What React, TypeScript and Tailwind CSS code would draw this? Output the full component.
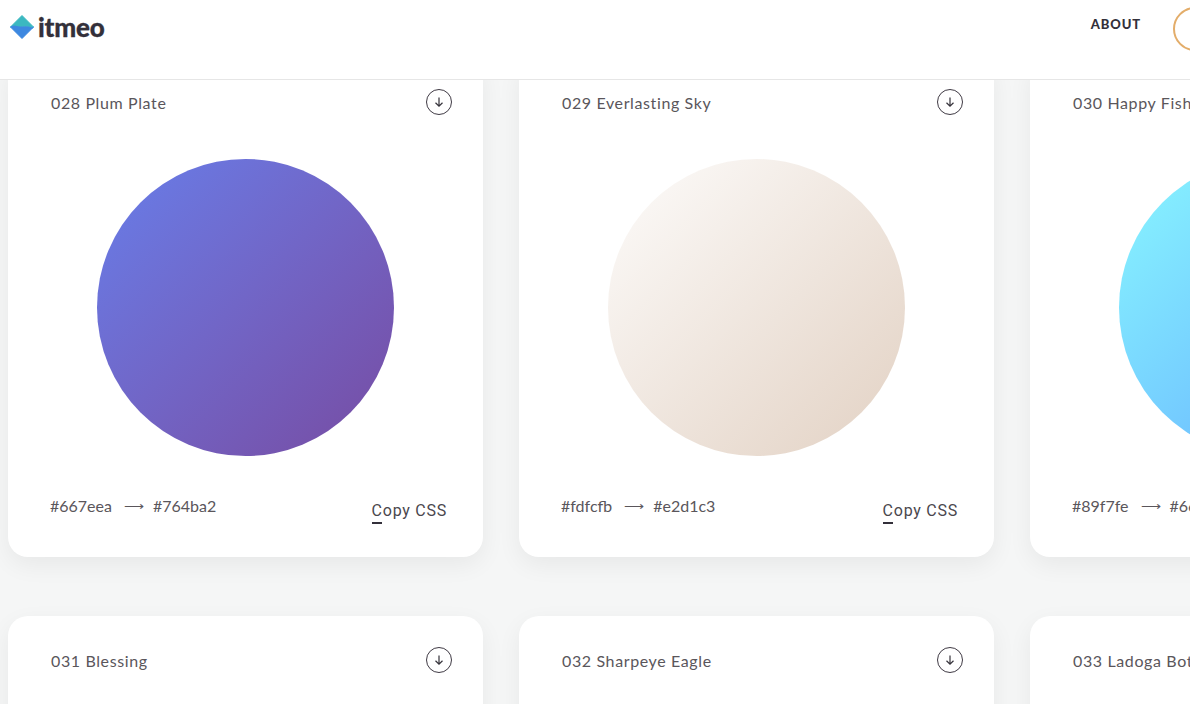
import React from 'react';

interface Gradient {
  id: string;
  name: string;
  from: string;
  to: string;
  circle: string;
}

const gradients: Gradient[] = [
  { id: '028', name: 'Plum Plate', from: '#667eea', to: '#764ba2', circle: 'bg-gradient-to-br from-[#667eea] to-[#764ba2]' },
  { id: '029', name: 'Everlasting Sky', from: '#fdfcfb', to: '#e2d1c3', circle: 'bg-gradient-to-br from-[#fdfcfb] to-[#e2d1c3]' },
  { id: '030', name: 'Happy Fisher', from: '#89f7fe', to: '#66a6ff', circle: 'bg-gradient-to-br from-[#89f7fe] to-[#66a6ff]' },
];

const nextRow = [
  { id: '031', name: 'Blessing' },
  { id: '032', name: 'Sharpeye Eagle' },
  { id: '033', name: 'Ladoga Bottom' },
];

const DownloadButton = () => (
  <button className="flex h-[26px] w-[26px] shrink-0 items-center justify-center rounded-full border border-[#3f3a44] text-[#35323a]">
    <svg width="12" height="12" viewBox="0 0 12 12" fill="none" stroke="currentColor" strokeWidth="1.2">
      <path d="M6 1.5V10M2.5 6.8 6 10.2l3.5-3.4" />
    </svg>
  </button>
);

const CardTitle = ({ id, name }: { id: string; name: string }) => (
  <div className="flex items-start justify-between pl-[43px] pr-[31px] pt-[31px]">
    <span className="mt-[3px] whitespace-nowrap text-[16px] leading-[22px] tracking-[0.62px] text-[#5a565b]">
      {id} {name}
    </span>
    <DownloadButton />
  </div>
);

const Logo = () => (
  <div className="flex items-center gap-[4px]">
    <svg width="24" height="24" viewBox="0 0 24 24" className="shrink-0">
      <path d="M12 0.5 23.5 12 22 13.2C17 10.5 12 13 7 11.5 4.5 10.8 2 11 0.5 12Z" fill="#3bb8c0" stroke="#3bb8c0" strokeLinejoin="round" />
      <path d="M0.5 12C2 11 4.5 10.8 7 11.5 12 13 17 10.5 22 13.2L23.5 12 12 23.5Z" fill="#3d88e0" stroke="#3d88e0" strokeLinejoin="round" />
    </svg>
    <span className="text-[26px] font-black leading-none tracking-[-0.2px] text-[#33303a] [-webkit-text-stroke:0.3px_#33303a]">itmeo</span>
  </div>
);

export default function App() {
  return (
    <div className="relative h-[704px] overflow-hidden bg-[#f5f6f6] font-['Lato','Noto_Sans',sans-serif]">
      <header className="absolute inset-x-0 top-0 z-10 flex h-[80px] items-start justify-between overflow-hidden border-b border-[#e6e6e6] bg-white pl-[10px]">
        <div className="pt-[14px]">
          <Logo />
        </div>
        <div className="flex items-start">
          <a className="mt-[16px] text-[13px] font-black leading-[16px] tracking-[0.9px] text-[#33303a]">ABOUT</a>
          <div className="ml-[32px] mt-[7px] h-[44px] w-[44px] -mr-[27px] rounded-full border-2 border-[#e3ad6a]" />
        </div>
      </header>

      <main className="flex flex-col gap-[59px] pl-2 pt-[58px]">
        <div className="flex gap-[36px]">
          {gradients.map((g) => (
            <section
              key={g.id}
              className="flex h-[499px] w-[475px] shrink-0 flex-col rounded-[20px] bg-white shadow-[0_8px_24px_rgba(0,0,0,0.06)]"
            >
              <CardTitle id={g.id} name={g.name} />
              <div className={`mx-auto mt-[44px] h-[297px] w-[297px] shrink-0 rounded-full ${g.circle}`} />
              <div className="flex items-start justify-between pl-[42px] pr-[36px] pt-[40px]">
                <div className="flex items-center whitespace-nowrap text-[16px] leading-[20px] text-[#5a565b]">
                  <span>{g.from}</span>
                  <span className="ml-[12px] mr-[9px] text-[14px]">⟶</span>
                  <span>{g.to}</span>
                </div>
                <button className="relative mt-[5px] whitespace-nowrap pb-[2px] font-['Roboto',sans-serif] text-[16px] leading-[20px] tracking-[0.75px] text-[#4a474d]">
                  Copy CSS
                  <span className="absolute left-0 top-[21px] h-[2px] w-[10px] bg-[#33303a]" />
                </button>
              </div>
            </section>
          ))}
        </div>
        <div className="flex gap-[36px]">
          {nextRow.map((c) => (
            <section key={c.id} className="h-[499px] w-[475px] shrink-0 rounded-[20px] bg-white shadow-[0_8px_24px_rgba(0,0,0,0.06)]">
              <CardTitle id={c.id} name={c.name} />
            </section>
          ))}
        </div>
      </main>
    </div>
  );
}
